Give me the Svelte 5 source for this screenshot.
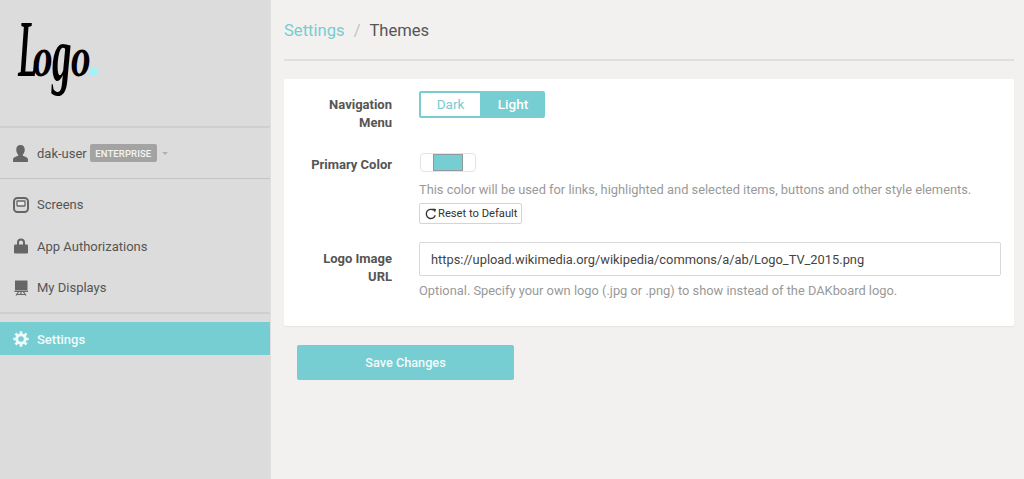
<script>
  const nav = [
    { label: 'Screens', icon: 'screen' },
    { label: 'App Authorizations', icon: 'lock' },
    { label: 'My Displays', icon: 'display' }
  ];
</script>

<div class="page">
  <aside class="sidebar">
    <div class="brand">
      <div class="logo"><span class="big">L</span><span class="rest">o</span><span class="rest g">g</span><span class="rest">o</span><span class="dot"></span></div>
    </div>
    <div class="user">
      <svg class="ic" width="17" height="17" viewBox="2 1 14 16"><path fill="#666" d="M9 1c2.6 0 4 1.9 4 4.4 0 2-.8 3.6-1.8 4.5v1.3c1.500.8 4.800 1.300 4.800 3.300V17H2v-2.500c0-2 3.300-2.500 4.800-3.300V9.900C5.800 9 5 7.400 5 5.400 5 2.900 6.400 1 9 1z"/></svg>
      <span class="uname">dak-user</span>
      <span class="badge">ENTERPRISE</span>
      <span class="caret"></span>
    </div>
    <nav class="items">
      {#each nav as item}
        <div class="item">
          {#if item.icon === 'screen'}
            <svg class="ic" width="16" height="16" viewBox="0 0 16 16"><rect x="1" y="1" width="14" height="14" rx="3.500" fill="none" stroke="#666" stroke-width="2"/><rect x="4" y="4" width="8" height="5" rx=".5" fill="#e8e8e8" stroke="#666" stroke-width="1.300"/></svg>
          {:else if item.icon === 'lock'}
            <svg class="ic" width="16" height="16" viewBox="0 0 16 16"><path fill="none" stroke="#666" stroke-width="2" d="M5 7V4.500C5 2.800 6.300 1.500 8 1.500s3 1.300 3 3V7"/><rect x="1" y="6.500" width="14" height="9" rx="1.200" fill="#666"/></svg>
          {:else}
            <svg class="ic" width="16" height="16" viewBox="0 0 16 16"><rect x="2" y="0.500" width="12.500" height="9.500" fill="#666"/><rect x="1.500" y="10.500" width="13.500" height="1.500" fill="#666"/><path fill="none" stroke="#666" stroke-width="1.200" d="M5.500 12 3 15.500M10.500 12 13 15.500M8 12v2M4 14.500h8"/></svg>
          {/if}
          <span>{item.label}</span>
        </div>
      {/each}
    </nav>
    <div class="item active">
      <svg class="ic" width="16" height="16" viewBox="0 0 16 16"><circle cx="8" cy="8" r="4.300" fill="none" stroke="#eefafa" stroke-width="3"/><g stroke="#eefafa" stroke-width="2.600"><path d="M8 .3v3M8 12.700v3M.3 8h3M12.700 8h3M2.500 2.500l2.100 2.100M11.400 11.400l2.100 2.100M2.500 13.500l2.100-2.100M11.400 4.600l2.100-2.100"/></g></svg>
      <span>Settings</span>
    </div>
  </aside>

  <main class="main">
    <header class="crumbs">
      <span class="crumb-link">Settings</span>
      <span class="sep">/</span>
      <span class="crumb-current">Themes</span>
    </header>

    <section class="card">
      <div class="row row-nav">
        <div class="label">Navigation Menu</div>
        <div class="toggle">
          <span class="opt">Dark</span>
          <span class="opt on">Light</span>
        </div>
      </div>

      <div class="row row-color">
        <div class="label">Primary Color</div>
        <div class="field">
          <div class="picker"><span class="swatch"></span></div>
          <p class="help">This color will be used for links, highlighted and selected items, buttons and other style elements.</p>
          <button class="reset">
            <svg width="12" height="12" viewBox="0 0 12 12"><path fill="none" stroke="#333" stroke-width="1.300" d="M10.300 7.300A4.600 4.600 0 1 1 8.800 2.300"/><path fill="#333" d="M7.400.4 11 .9l-.9 3.500z"/></svg>
            <span>Reset to Default</span>
          </button>
        </div>
      </div>

      <div class="row row-url">
        <div class="label">Logo Image URL</div>
        <div class="field">
          <input class="url" type="text" value="https://upload.wikimedia.org/wikipedia/commons/a/ab/Logo_TV_2015.png" />
          <p class="help help-url">Optional. Specify your own logo (.jpg or .png) to show instead of the DAKboard logo.</p>
        </div>
      </div>
    </section>

    <button class="save">Save Changes</button>
  </main>
</div>

<style>
  :global(body) {
    margin: 0;
    background: #f2f1ef;
  }
  .page {
    display: flex;
    height: 479px;
    overflow: hidden;
    font-family: Roboto, "Liberation Sans", sans-serif;
    color: #555;
  }
  .sidebar {
    width: 271px;
    flex: none;
    box-sizing: border-box;
    background: #dcdcdc;
    border-right: 1px solid #e0e0e0;
  }
  .brand {
    height: 126px;
    border-bottom: 2px solid #cfcfcf;
    padding-left: 18px;
  }
  .logo {
    display: flex;
    align-items: baseline;
    color: #000;
    font-family: "Liberation Serif", serif;
    font-style: italic;
    font-weight: 700;
    line-height: 74px;
    height: 74px;
    padding-top: 12px;
  }
  .big {
    display: inline-block;
    font-size: 80px;
    width: 15px;
    transform: scaleX(.4);
    transform-origin: left;
  }
  .rest {
    display: inline-block;
    font-size: 56px;
    width: 19px;
    transform: scaleX(.7);
    transform-origin: left;
  }
  .g {
    transform: scale(.7, 1.35);
    transform-origin: 0 62%;
  }
  .dot {
    width: 8px;
    height: 8px;
    border-radius: 50%;
    background: #9cf6f8;
    margin-bottom: 9px;
  }
  .user {
    height: 51px;
    display: flex;
    align-items: center;
    padding-left: 12px;
    border-bottom: 1px solid #c4c4c4;
    box-sizing: border-box;
  }
  .uname {
    margin-left: 8px;
    font-size: 13px;
    color: #555;
  }
  .badge {
    margin-left: 3px;
    width: 67px;
    text-align: center;
    height: 18px;
    line-height: 19px;
    background: #a3a3a3;
    border-radius: 2px;
    color: #f4f4f4;
    font-size: 9.500px;
    font-weight: 500;
    letter-spacing: .1px;
  }
  .caret {
    margin-left: 5px;
    margin-top: 1px;
    border-left: 3.500px solid transparent;
    border-right: 3.500px solid transparent;
    border-top: 3.500px solid #b0b0b0;
  }
  .items {
    padding-top: 5px;
    border-bottom: 2px solid #cfcfcf;
    margin-bottom: 8px;
    height: 128px;
  }
  .item {
    display: flex;
    align-items: center;
    height: 41.500px;
    padding-left: 13px;
    font-size: 13px;
    color: #555;
  }
  .ic {
    flex: none;
  }
  .item span {
    margin-left: 8px;
  }
  .active {
    height: 33px;
    box-sizing: border-box;
    padding-top: 1px;
    background: #76cdd2;
    color: #f2fbfb;
    font-weight: 500;
  }
  .main {
    flex: 1;
    min-width: 0;
    padding: 0 10px 0 13px;
  }
  .crumbs {
    box-sizing: border-box;
    padding-top: 20px;
    border-bottom: 2px solid #e0dfdc;
    height: 61px;
    font-size: 16.600px;
    line-height: 21px;
  }
  .crumb-link {
    color: #76cdd2;
  }
  .sep {
    color: #c4c4c4;
    margin: 0 5px;
  }
  .crumb-current {
    color: #555;
  }
  .card {
    margin-top: 18px;
    height: 247px;
    box-sizing: border-box;
    background: #fff;
    border-radius: 2px;
    box-shadow: 0 1px 1px #e6e5e2;
    padding-top: 12px;
  }
  .row {
    display: grid;
    grid-template-columns: 108px 1fr;
    column-gap: 27px;
  }
  .row-nav {
    height: 62px;
  }
  .row-color {
    height: 89px;
  }
  .label {
    text-align: right;
    font-size: 13px;
    font-weight: 700;
    line-height: 18px;
    color: #555;
    padding-top: 5px;
  }
  .row-color .label {
    padding-top: 3px;
  }
  .row-url .label {
    padding-top: 8px;
  }
  .row-nav .label,
  .row-url .label {
    padding-left: 30px;
  }
  .toggle {
    display: flex;
    width: 126px;
    height: 27px;
    box-sizing: border-box;
    border: 2px solid #76cdd2;
    border-radius: 2px;
    font-size: 13.500px;
  }
  .opt {
    flex: 0 0 59px;
    text-align: center;
    line-height: 23px;
    color: #76cdd2;
  }
  .on {
    flex: 1;
    padding-left: 3px;
    background: #76cdd2;
    color: #fff;
    font-weight: 500;
  }
  .picker {
    width: 56px;
    height: 19px;
    box-sizing: border-box;
    border: 1px solid #e4e4e4;
    border-radius: 4px;
    background: #fff;
    display: flex;
    justify-content: center;
    margin-left: 1px;
  }
  .swatch {
    width: 30px;
    height: 17px;
    box-sizing: border-box;
    background: #76cdd2;
    border: 1px solid #8f9b9c;
  }
  .help {
    margin: 9px 0 0;
    font-size: 12.850px;
    line-height: 18px;
    color: #999;
    white-space: nowrap;
  }
  .reset {
    display: flex;
    align-items: center;
    gap: 1px;
    margin-top: 4px;
    padding: 0 0 0 5px;
    width: 103px;
    height: 21px;
    box-sizing: border-box;
    background: #fff;
    border: 1px solid #d4d4d4;
    border-radius: 2px;
    font: 11.200px/1 Roboto, sans-serif;
    color: #333;
    white-space: nowrap;
  }
  .url {
    display: block;
    width: 582px;
    height: 34px;
    box-sizing: border-box;
    padding: 0 11px;
    border: 1px solid #d8d8d8;
    border-radius: 2px;
    font: 12.850px Roboto, sans-serif;
    color: #444;
    outline: none;
  }
  .help-url {
    margin-top: 6px;
  }
  .save {
    display: block;
    margin: 19px 0 0 13px;
    width: 217px;
    height: 35px;
    background: #76cdd2;
    border: 0;
    border-radius: 2px;
    color: #f4fbfb;
    font: 500 12.700px Roboto, sans-serif;
  }
</style>
